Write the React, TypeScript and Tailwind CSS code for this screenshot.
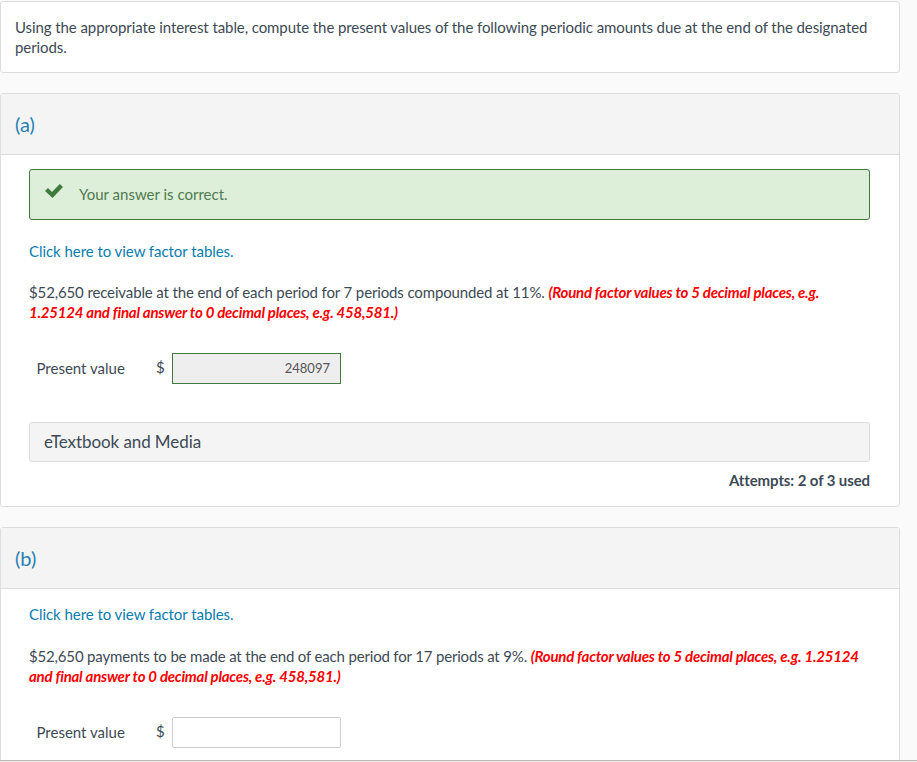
import React from "react";

function PresentRow({ value, graded }: { value?: string; graded?: boolean }) {
  return (
    <div className="flex items-center h-[31px] ml-[7.5px]">
      <span className="w-[119.5px] text-[15px] text-[#3d4a55] leading-5 -mt-[2px]">Present value</span>
      <span className="w-[16px] text-[15px] text-[#3d4a55] leading-5 -mt-[3px]">$</span>
      <div
        className={
          graded
            ? "w-[169px] h-[31px] border border-[#3f7a3f] bg-[#eeeeee] flex items-center justify-end pr-[10px] text-[13px] text-[#555555]"
            : "w-[169px] h-[31px] border border-[#cccccc] bg-white rounded-[2px]"
        }
      >
        {value}
      </div>
    </div>
  );
}

function Header({ label }: { label: string }) {
  return (
    <div className="h-[61px] bg-[#f4f4f4] border-b border-[#dddddd] flex items-center pl-[14px] pb-[1px] text-[20px] text-[#2a7fb5]">
      {label}
    </div>
  );
}

export default function App() {
  return (
    <div className="w-[917px] h-[762px] overflow-hidden bg-[#f3ebe7]">
      <div
        className="h-[761px] overflow-hidden border-b border-[#bbbbbb] bg-[#fafafa] pt-px text-[#3d4a55]"
        style={{ fontFamily: '"Lato", "Liberation Sans", sans-serif' }}
      >
        <div className="w-[900px] h-[72px] bg-white border border-[#dddddd] rounded-[3px] pl-[14px] pr-[20px] pt-[15px] text-[15px] leading-[20px] tracking-[-0.085px]">
          Using the appropriate interest table, compute the present values of the following periodic amounts due at the end of the designated periods.
        </div>

        <div className="w-[900px] h-[414px] mt-[20px] bg-white border border-[#dddddd] rounded-[3px]">
          <Header label="(a)" />
          <div className="pl-[28px] pr-[29px] pt-[14px]">
            <div className="h-[51px] border border-[#3f7a3f] rounded-[3px] bg-[#deefd9] flex items-center pl-[15px]">
              <svg width="18" height="14" viewBox="0 0 18 14" className="-mt-[7px] mr-[16px]">
                <path d="M0 7 L3 4 L7 8 L14.8 0 L18 3 L7.5 14 Z" fill="#3f7a3f" />
              </svg>
              <span className="text-[15px] text-[#4f7a4f]">Your answer is correct.</span>
            </div>
            <a className="block mt-[21px] text-[15px] leading-5 text-[#0a7cb0] tracking-[-0.05px]">Click here to view factor tables.</a>
            <p className="mt-[21px] text-[15px] leading-5 tracking-[-0.13px]">
              $52,650 receivable at the end of each period for 7 periods compounded at 11%.{" "}
              <b className="text-[#ff0000] italic tracking-[-0.22px]">
                (Round factor values to 5 decimal places, e.g. 1.25124 and final answer to 0 decimal places, e.g. 458,581.)
              </b>
            </p>
            <div className="mt-[31px]">
              <PresentRow value="248097" graded />
            </div>
            <div className="mt-[38px] h-[40px] bg-[#f4f4f4] border border-[#dddddd] rounded-[3px] flex items-center pl-[14px] pb-[1px] text-[17px] text-[#3d4a55] tracking-[-0.08px]">
              eTextbook and Media
            </div>
            <div className="mt-[8px] text-right text-[15px] font-bold leading-5 tracking-[-0.1px]">
              Attempts: 2 of 3 used
            </div>
          </div>
        </div>

        <div className="w-[900px] h-[300px] mt-[20px] bg-white border border-[#dddddd] rounded-[3px]">
          <Header label="(b)" />
          <div className="pl-[28px] pr-[29px] pt-[15px]">
            <a className="block text-[15px] leading-5 text-[#0a7cb0] tracking-[-0.05px]">Click here to view factor tables.</a>
            <p className="mt-[22px] text-[15px] leading-5 tracking-[-0.17px]">
              $52,650 payments to be made at the end of each period for 17 periods at 9%.{" "}
              <b className="text-[#ff0000] italic tracking-[-0.22px]">
                (Round factor values to 5 decimal places, e.g. 1.25124 and final answer to 0 decimal places, e.g. 458,581.)
              </b>
            </p>
            <div className="mt-[31px]">
              <PresentRow />
            </div>
          </div>
        </div>
      </div>
    </div>
  );
}
